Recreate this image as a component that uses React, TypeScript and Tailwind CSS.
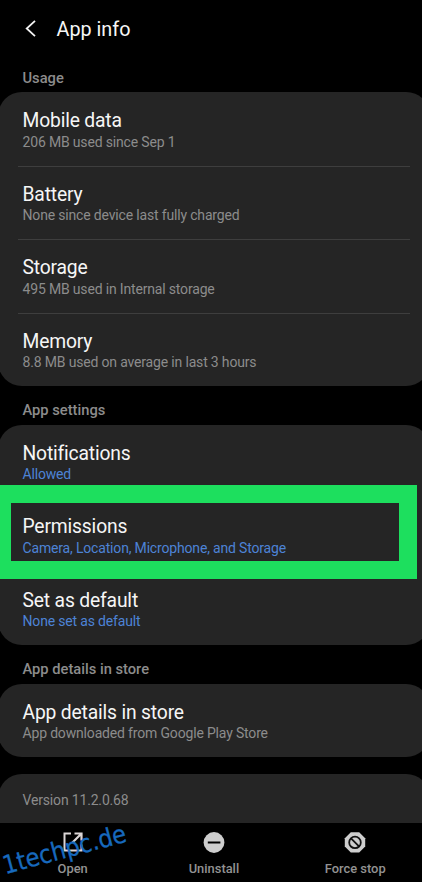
import { ReactNode } from 'react';

type Item = { title: string; text: string; active?: boolean; marked?: boolean };

const usage: Item[] = [
    { title: 'Mobile data', text: '206 MB used since Sep 1' },
    { title: 'Battery', text: 'None since device last fully charged' },
    { title: 'Storage', text: '495 MB used in Internal storage' },
    { title: 'Memory', text: '8.8 MB used on average in last 3 hours' },
];

const settings: Item[] = [
    { title: 'Notifications', text: 'Allowed', active: true },
    { title: 'Permissions', text: 'Camera, Location, Microphone, and Storage', active: true, marked: true },
    { title: 'Set as default', text: 'None set as default', active: true },
];

const store: Item[] = [{ title: 'App details in store', text: 'App downloaded from Google Play Store' }];

function SectionTitle({ children }: { children: ReactNode }) {
    return <h2 className="h-[38.5px] pl-[22.5px] pt-[14px] text-[14.7px] font-medium leading-5 text-[#8c8c8c]">{children}</h2>;
}

function Row({ item, last }: { item: Item; last: boolean }) {
    return (
        <li className="relative h-[73.5px] pl-[24.5px] pr-5 pt-[17px]">
            <div className="text-[19.3px] leading-6 tracking-[-0.17px] text-[#f6f6f6]">{item.title}</div>
            <div className={item.active ? 'mt-[-1.5px] text-[14px] leading-5 tracking-[-0.17px] text-[#4d83d6]' : 'mt-[-1.5px] text-[14px] leading-5 tracking-[-0.17px] text-[#8c8c8c]'}>{item.text}</div>
            {!last && <div className="absolute bottom-[-1px] left-5 right-5 h-px bg-[#3e3e3e]" />}
            {item.marked && (
                <div className="absolute bottom-[-7.5px] left-[2px] right-[13px] top-[-13.5px] z-10 border-b-[18px] border-l-[11px] border-r-[18px] border-t-[18px] border-[#1ddf5e]" />
            )}
        </li>
    );
}

function Card({ items }: { items: Item[] }) {
    return (
        <ul className="-ml-[2px] -mr-[8px] rounded-[24px] bg-[#252525]">
            {items.map((item, i) => (
                <Row key={item.title} item={item} last={i === items.length - 1} />
            ))}
        </ul>
    );
}

function Action({ label, children }: { label: string; children: ReactNode }) {
    return (
        <button className="flex w-[141.3px] shrink-0 flex-col items-center pt-[8px]">
            <svg width="22" height="22" viewBox="0 0 22 22" fill="none">{children}</svg>
            <span className="mt-[6px] text-[12.9px] font-medium leading-5 text-[#929292]">{label}</span>
        </button>
    );
}

export default function App() {
    return (
        <div className="relative flex h-[882px] w-[422px] flex-col overflow-hidden bg-black font-['Roboto',sans-serif]">
            <header className="flex h-[53.5px] items-center pl-[25px] pt-[4px]">
                <svg width="11" height="18" viewBox="0 0 11 18" fill="none" stroke="#f2f2f2" strokeWidth="1.8">
                    <path d="M10 .8 1.7 8.5l8.3 7.7" />
                </svg>
                <h1 className="ml-[20.5px] pt-[2px] text-[19.8px] leading-6 text-[#f6f6f6]">App info</h1>
            </header>
            <main className="flex-1">
                <SectionTitle>Usage</SectionTitle>
                <Card items={usage} />
                <SectionTitle>App settings</SectionTitle>
                <Card items={settings} />
                <SectionTitle>App details in store</SectionTitle>
                <Card items={store} />
                <div className="-ml-[2px] -mr-[8px] mt-[17px] h-[49px] rounded-t-[24px] bg-[#252525] pl-[24.5px] pt-[16px] text-[14px] leading-5 tracking-[-0.17px] text-[#8c8c8c]">
                    Version 11.2.0.68
                </div>
            </main>
            <footer className="flex h-[59px] bg-black pl-[2px]">
                <Action label="Open">
                    <path d="M9 2.5H2.5v17h17v-6" stroke="#dcd6d6" strokeWidth="2" />
                    <path d="M12.5 2.5h7v7M19 3l-8.5 8.5" stroke="#dcd6d6" strokeWidth="2.2" />
                </Action>
                <Action label="Uninstall">
                    <circle cx="11" cy="11.5" r="10.4" fill="#cecece" />
                    <path d="M4.8 11.5h12.6" stroke="#000" strokeWidth="2" />
                </Action>
                <Action label="Force stop">
                    <path d="M6.8 1.2h8.4l6 6v8.4l-6 6H6.8l-6-6V7.2z" fill="#cecece" />
                    <circle cx="11" cy="11.4" r="5.8" stroke="#111" strokeWidth="1.8" />
                    <path d="m7 7.4 8 8" stroke="#111" strokeWidth="1.8" />
                </Action>
            </footer>
            <div className="absolute left-[1px] top-[836px] origin-center -rotate-[15deg] whitespace-nowrap font-['DejaVu_Sans_Condensed','DejaVu_Sans',sans-serif] text-[25.3px] leading-7 text-[#1769bd] [font-stretch:condensed] [-webkit-text-stroke:0.3px_#1769bd]">
                1techpc.de
            </div>
        </div>
    );
}
